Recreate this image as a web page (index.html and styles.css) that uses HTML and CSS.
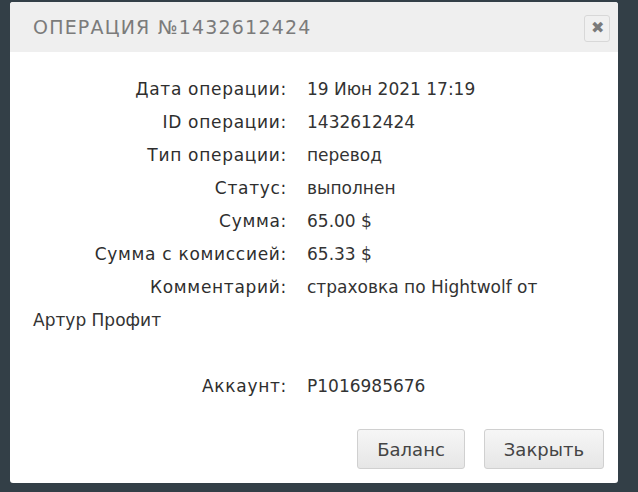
FILE: index.html
```html
<!DOCTYPE html>
<html lang="ru">
<head>
  <meta charset="UTF-8" />
  <title>Операция</title>
  <link rel="stylesheet" href="styles.css">
</head>
<body>
  <div class="dialog">
    <div class="dialog-head">
      <span class="dialog-title">Операция №1432612424</span>
      <button class="close-btn" type="button">&#10006;</button>
    </div>
    <div class="dialog-body">
      <p class="info">
        <span class="lbl">Дата операции:</span>19 Июн 2021 17:19<br>
        <span class="lbl">ID операции:</span>1432612424<br>
        <span class="lbl">Тип операции:</span>перевод<br>
        <span class="lbl">Статус:</span>выполнен<br>
        <span class="lbl">Сумма:</span>65.00 $<br>
        <span class="lbl">Сумма с комиссией:</span>65.33 $<br>
        <span class="lbl">Комментарий:</span>страховка по Hightwolf от Артур Профит<br>
        <br>
        <span class="lbl">Аккаунт:</span>P1016985676
      </p>
    </div>
    <div class="dialog-foot">
      <button class="btn" type="button">Баланс</button>
      <button class="btn" type="button">Закрыть</button>
    </div>
  </div>
</body>
</html>
```

FILE: styles.css
```css
body {
  margin: 0;
  background: #333f47;
  font-family: 'DejaVu Sans', sans-serif;
}
.dialog {
  margin: 2px 0 0 10px;
  width: 608px;
  height: 481px;
  background: #fff;
  border-radius: 3px;
  display: flex;
  flex-direction: column;
}
.dialog-head {
  height: 50px;
  background: #efefef;
  border-radius: 3px 3px 0 0;
  display: flex;
  align-items: center;
  justify-content: space-between;
  padding: 0 8px 0 23px;
}
.dialog-title {
  text-transform: uppercase;
  color: #7b7b7b;
  font-size: 19px;
  letter-spacing: 1.2px;
}
.close-btn {
  width: 26px;
  height: 27px;
  margin-top: 2px;
  padding: 0;
  border: 1px solid #d8d8d8;
  border-radius: 3px;
  background: #f0f0f0;
  color: #7a7a7a;
  font-size: 16px;
  line-height: 1;
}
.dialog-body {
  flex: 1;
  padding: 21px 40px 0 23px;
}
.info {
  margin: 0;
  font-size: 17px;
  line-height: 33px;
  color: #333;
}
.lbl {
  display: inline-block;
  width: 254px;
  margin-right: 20px;
  text-align: right;
  letter-spacing: 0.7px;
  color: #2e2e2e;
}
.dialog-foot {
  display: flex;
  justify-content: flex-end;
  gap: 19px;
  padding: 0 14px 14px;
}
.btn {
  height: 40px;
  padding: 0 19px;
  border: 1px solid #d0d0d0;
  border-radius: 3px;
  background: linear-gradient(#f6f6f6, #e6e6e6);
  color: #444;
  font-family: 'DejaVu Sans', sans-serif;
  font-size: 18px;
}
```
